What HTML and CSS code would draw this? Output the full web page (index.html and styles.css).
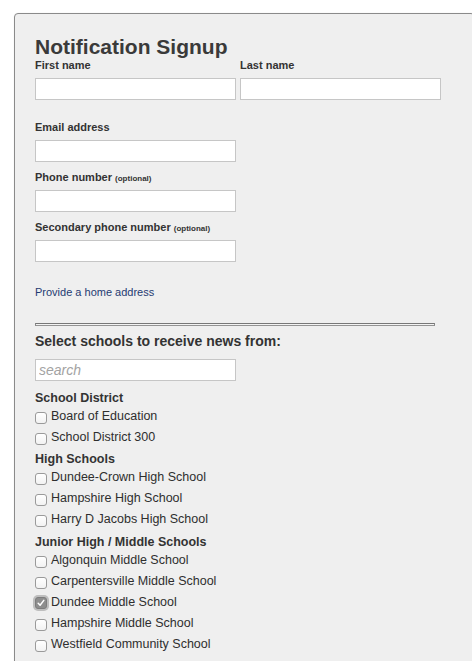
FILE: index.html
```html
<!DOCTYPE html>
<html>
<head>
<meta charset="utf-8">
<title>Notification Signup</title>
<link rel="stylesheet" href="styles.css">
</head>
<body>
<div class="panel">
  <h1 class="title">Notification Signup</h1>
  <div class="name-row">
    <div class="field">
      <label class="lbl">First name</label>
      <input class="txt" type="text">
    </div>
    <div class="field">
      <label class="lbl">Last name</label>
      <input class="txt" type="text">
    </div>
  </div>
  <div class="field group-field">
    <label class="lbl">Email address</label>
    <input class="txt" type="text">
  </div>
  <div class="field group-field">
    <label class="lbl">Phone number <span class="opt-note">(optional)</span></label>
    <input class="txt" type="text">
  </div>
  <div class="field group-field">
    <label class="lbl">Secondary phone number <span class="opt-note">(optional)</span></label>
    <input class="txt" type="text">
  </div>
  <a class="home-link" href="#">Provide a home address</a>
  <hr class="rule">
  <h2 class="schools-title">Select schools to receive news from:</h2>
  <input class="txt search" type="text" placeholder="search">

  <h3 class="group-title">School District</h3>
  <label class="opt"><span class="box"></span>Board of Education</label>
  <label class="opt"><span class="box"></span>School District 300</label>

  <h3 class="group-title">High Schools</h3>
  <label class="opt"><span class="box"></span>Dundee-Crown High School</label>
  <label class="opt"><span class="box"></span>Hampshire High School</label>
  <label class="opt"><span class="box"></span>Harry D Jacobs High School</label>

  <h3 class="group-title">Junior High / Middle Schools</h3>
  <label class="opt"><span class="box"></span>Algonquin Middle School</label>
  <label class="opt"><span class="box"></span>Carpentersville Middle School</label>
  <label class="opt"><span class="box checked"><svg width="8" height="8" viewBox="0 0 8 8"><path d="M1.2 4.3 L3.1 6.3 L6.8 1.4" fill="none" stroke="#fff" stroke-width="1.5" stroke-linecap="round" stroke-linejoin="round"/></svg></span>Dundee Middle School</label>
  <label class="opt"><span class="box"></span>Hampshire Middle School</label>
  <label class="opt"><span class="box"></span>Westfield Community School</label>
</div>
</body>
</html>
```
FILE: styles.css
```css
html, body {
  margin: 0;
  padding: 0;
  background: #ffffff;
}
body {
  font-family: "Liberation Sans", Arial, Helvetica, sans-serif;
  color: #333333;
}
.panel {
  margin: 13px 0 0 14px;
  width: 439px;
  border: 1px solid #8a8a8a;
  border-radius: 4px;
  background: #efefef;
  box-shadow: 1px 1px 2px rgba(0, 0, 0, 0.35);
  padding: 21px 0 20px 20px;
  box-sizing: content-box;
  display: flex;
  flex-direction: column;
  align-items: flex-start;
}
.title {
  margin: 0;
  font-size: 21px;
  line-height: 24px;
  font-weight: bold;
  color: #3a3a3a;
}
.name-row {
  display: grid;
  grid-template-columns: 201px 201px;
  column-gap: 4px;
  margin-bottom: 21px;
}
.field {
  display: flex;
  flex-direction: column;
}
.group-field + .group-field {
  margin-top: 9px;
}
.lbl {
  font-size: 11px;
  line-height: 13px;
  height: 13px;
  font-weight: bold;
  color: #333333;
  margin-bottom: 6px;
}
.opt-note {
  font-size: 8px;
  line-height: 1;
  font-weight: bold;
}
.txt {
  box-sizing: border-box;
  width: 201px;
  height: 22px;
  margin: 0;
  border: 1px solid #c6c6c6;
  background: #ffffff;
  padding: 0 3px;
  font-family: "Liberation Sans", Arial, sans-serif;
  font-size: 14px;
  outline: none;
}
.home-link {
  margin-top: 24px;
  font-size: 11px;
  line-height: 13px;
  color: #1f3b72;
  text-decoration: none;
}
.rule {
  align-self: stretch;
  width: 398px;
  height: 1px;
  margin: 24px 0 0 0;
  border: 1px solid #8a8a8a;
  border-top-color: #777777;
  border-bottom-color: #939393;
  background: #f3f3f3;
}
.schools-title {
  margin: 7px 0 0 0;
  font-size: 14px;
  line-height: 16px;
  font-weight: bold;
  color: #333333;
}
.search {
  margin-top: 10px;
  margin-bottom: 5px;
}
.search::placeholder {
  color: #a3a3a3;
  font-style: italic;
}
.group-title {
  margin: 4.5px 0 0 0;
  font-size: 12.5px;
  line-height: 15px;
  font-weight: bold;
  color: #333333;
}
.opt {
  display: flex;
  align-items: flex-start;
  height: 21px;
  font-size: 12.5px;
  line-height: 21px;
  color: #2e2e2e;
}
.box {
  box-sizing: border-box;
  width: 12px;
  height: 12px;
  margin: 6px 4px 0 0;
  border: 1px solid #9a9a9a;
  border-radius: 3px;
  background: linear-gradient(#ffffff, #f2f2f2);
  display: flex;
  align-items: center;
  justify-content: center;
}
.box.checked {
  border-color: #7d7d7d;
  background: #8e8e8e;
  box-shadow: 0 0 0 2px rgba(150, 150, 150, 0.55);
  margin-top: 5px;
}
```
